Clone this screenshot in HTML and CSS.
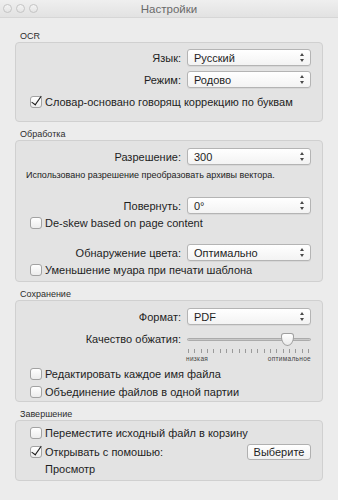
FILE: index.html
```html
<!DOCTYPE html>
<html lang="ru">
<head>
  <meta charset="UTF-8" />
  <title>Настройки</title>
  <link rel="stylesheet" href="styles.css">
</head>
<body>
  <div class="window">
    <div class="titlebar">
      <div class="lights">
        <span class="light"></span>
        <span class="light"></span>
        <span class="light"></span>
      </div>
      <div class="title">Настройки</div>
    </div>

    <div class="content">
      <!-- OCR -->
      <div class="group-label">OCR</div>
      <div class="group group-ocr">
        <div class="row row-first">
          <span class="label">Язык:</span>
          <div class="popup"><span>Русский</span><span class="arrows"></span></div>
        </div>
        <div class="row row-next">
          <span class="label">Режим:</span>
          <div class="popup"><span>Родово</span><span class="arrows"></span></div>
        </div>
        <label class="check check-ocr">
          <span class="box checked"></span>Словар-основано говорящ коррекцию по буквам
        </label>
      </div>

      <!-- Обработка -->
      <div class="group-label">Обработка</div>
      <div class="group group-proc">
        <div class="row row-first">
          <span class="label">Разрешение:</span>
          <div class="popup"><span>300</span><span class="arrows"></span></div>
        </div>
        <div class="hint">Использовано разрешение преобразовать архивы вектора.</div>
        <div class="row row-rotate">
          <span class="label">Повернуть:</span>
          <div class="popup"><span>0°</span><span class="arrows"></span></div>
        </div>
        <label class="check check-tight">
          <span class="box"></span>De-skew based on page content
        </label>
        <div class="row row-color">
          <span class="label">Обнаружение цвета:</span>
          <div class="popup"><span>Оптимально</span><span class="arrows"></span></div>
        </div>
        <label class="check check-tight">
          <span class="box"></span>Уменьшение муара при печати шаблона
        </label>
      </div>

      <!-- Сохранение -->
      <div class="group-label">Сохранение</div>
      <div class="group group-save">
        <div class="row row-first">
          <span class="label">Формат:</span>
          <div class="popup"><span>PDF</span><span class="arrows"></span></div>
        </div>
        <div class="row row-slider">
          <span class="label">Качество обжатия:</span>
          <div class="slider">
            <div class="track"></div>
            <div class="knob"></div>
          </div>
        </div>
        <div class="ticks-row">
          <div class="ticks">
            <span></span><span></span><span></span><span></span><span></span><span></span>
            <span></span><span></span><span></span><span></span><span></span><span></span>
            <span></span><span></span><span></span><span></span><span></span><span></span>
            <span></span><span></span>
          </div>
          <div class="tick-labels"><span>низкая</span><span>оптимальное</span></div>
        </div>
        <label class="check check-save1">
          <span class="box"></span>Редактировать каждое имя файла
        </label>
        <label class="check check-save2">
          <span class="box"></span>Объединение файлов в одной партии
        </label>
      </div>

      <!-- Завершение -->
      <div class="group-label">Завершение</div>
      <div class="group group-done">
        <label class="check check-done1">
          <span class="box"></span>Переместите исходный файл в корзину
        </label>
        <div class="open-row">
          <label class="check">
            <span class="box checked"></span>Открывать с помошью:
          </label>
          <button class="btn">Выберите</button>
        </div>
        <div class="app-name">Просмотр</div>
      </div>
    </div>
  </div>
</body>
</html>
```

FILE: styles.css
```css
* {
  box-sizing: border-box;
}

body {
  margin: 0;
  background: #ececec;
  font-family: "Liberation Sans", Arial, sans-serif;
  font-size: 11px;
  color: #1e1e1e;
}

.window {
  width: 338px;
  height: 500px;
  background: #ececec;
  overflow: hidden;
}

.titlebar {
  height: 18px;
  position: relative;
  background: linear-gradient(#efefef, #e2e2e2);
  border-bottom: 1px solid #d6d6d6;
  display: flex;
  align-items: center;
  justify-content: center;
}

.lights {
  position: absolute;
  left: 3px;
  top: 4px;
  display: flex;
  gap: 4px;
}

.light {
  width: 9px;
  height: 9px;
  border-radius: 50%;
  border: 1px solid #c4c4c4;
  background: linear-gradient(#f4f4f4, #e4e4e4);
}

.title {
  font-size: 11.5px;
  color: #6a6a6a;
  padding-top: 1px;
}

.content {
  padding: 12px 15px 0 15px;
}

.group-label {
  height: 12px;
  line-height: 12px;
  font-size: 9px;
  color: #2c2c2c;
  padding-left: 5px;
}

.group {
  border: 1px solid #d0d0d0;
  border-radius: 4px;
  background: #e3e3e3;
  margin-bottom: 6px;
}

.group-ocr { height: 80px; padding-top: 6px; }
.group-proc { height: 142px; padding-top: 7px; }
.group-save { height: 102px; padding-top: 7px; }
.group-done { height: 61px; padding-top: 4px; }

.row {
  display: flex;
  justify-content: flex-end;
  align-items: center;
  padding-right: 11px;
  height: 17px;
}

.row-next { margin-top: 5px; }
.row-rotate { margin-top: 16px; }
.row-color { margin-top: 13px; }
.row-slider { margin-top: 6px; height: 16px; }

.label {
  margin-right: 6px;
  white-space: nowrap;
}

.popup {
  width: 124px;
  height: 17px;
  border: 1px solid #b4b4b4;
  border-radius: 3px;
  background: linear-gradient(#ffffff, #f3f3f3);
  box-shadow: 0 1px 0 rgba(0, 0, 0, 0.05);
  display: flex;
  align-items: center;
  justify-content: space-between;
  padding: 0 5px 0 6px;
}

.arrows {
  width: 5px;
  height: 9px;
  position: relative;
}

.arrows::before,
.arrows::after {
  content: "";
  position: absolute;
  left: 0;
  border-left: 2.5px solid transparent;
  border-right: 2.5px solid transparent;
}

.arrows::before {
  top: 0;
  border-bottom: 3px solid #4a4a4a;
}

.arrows::after {
  bottom: 0;
  border-top: 3px solid #4a4a4a;
}

.hint {
  font-size: 9px;
  height: 12px;
  line-height: 12px;
  margin-top: 4px;
  padding-left: 10px;
  color: #222;
}

.check {
  display: flex;
  align-items: center;
  height: 16px;
  padding-left: 14px;
  white-space: nowrap;
}

.check-ocr { margin-top: 6px; }
.check-tight { margin-top: 1px; }
.check-save1 { margin-top: 4px; }
.check-save2 { margin-top: 2px; }

.box {
  width: 12px;
  height: 12px;
  border: 1px solid #a2a2a2;
  border-radius: 3px;
  background: linear-gradient(#ffffff, #ececec);
  margin-right: 3px;
  position: relative;
  flex: none;
}

.box.checked::after {
  content: "";
  position: absolute;
  left: 3px;
  top: -3px;
  width: 4px;
  height: 10px;
  border-right: 1.5px solid #1a1a1a;
  border-bottom: 1.5px solid #1a1a1a;
  transform: rotate(35deg);
}

/* slider */
.slider {
  width: 124px;
  height: 16px;
  position: relative;
}

.track {
  position: absolute;
  left: 0;
  right: 0;
  top: 7px;
  height: 3px;
  border-radius: 2px;
  background: #c9c9c9;
  border: 1px solid #ababab;
}

.knob {
  position: absolute;
  left: 94px;
  top: 2px;
  width: 13px;
  height: 13px;
  background: linear-gradient(#ffffff, #eaeaea);
  border: 1px solid #9f9f9f;
  border-radius: 3px 3px 50% 50% / 3px 3px 70% 70%;
}

.ticks-row {
  padding-left: 170px;
  padding-right: 11px;
  margin-top: 2px;
}

.ticks {
  display: flex;
  justify-content: space-between;
  height: 4px;
  padding: 0 2px;
}

.ticks span {
  width: 1px;
  height: 4px;
  background: #9a9a9a;
}

.tick-labels {
  display: flex;
  justify-content: space-between;
  font-size: 6.5px;
  line-height: 7px;
  margin-top: 2px;
  color: #444;
  letter-spacing: 0.3px;
}

/* finish group */
.open-row {
  display: flex;
  justify-content: space-between;
  align-items: center;
  margin-top: 3px;
  padding-right: 11px;
}

.btn {
  width: 64px;
  height: 16px;
  border: 1px solid #b0b0b0;
  border-radius: 3px;
  background: linear-gradient(#ffffff, #f0f0f0);
  font-family: inherit;
  font-size: 11px;
  color: #1e1e1e;
  padding: 0;
  line-height: 14px;
}

.app-name {
  padding-left: 29px;
  margin-top: 2px;
  height: 14px;
  line-height: 14px;
}
```
